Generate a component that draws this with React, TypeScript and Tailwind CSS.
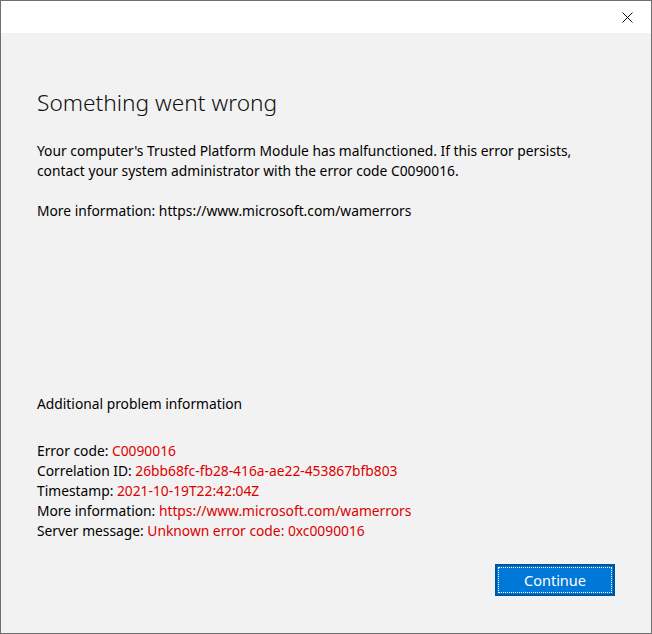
import React from 'react';

const red = 'text-[#dc0000]';

function Row({ label, value }: { label: string; value: string }) {
  return (
    <div className="h-[20px] leading-[20px]">
      {label} <span className={red}>{value}</span>
    </div>
  );
}

export default function App() {
  return (
    <div
      className="flex h-[634px] w-[652px] flex-col border border-[#6f6f6f] bg-[#f2f2f2] text-[13.8px] text-black"
      style={{ fontFamily: '"Noto Sans", "Open Sans", sans-serif' }}
    >
      {/* title bar */}
      <div className="flex h-[32px] shrink-0 items-center justify-end bg-white pr-[18px]">
        <svg width="11" height="11" viewBox="0 0 11 11" className="mt-[1px]">
          <path d="M0.5 0.5 L10.5 10.5 M10.5 0.5 L0.5 10.5" stroke="#111" strokeWidth="1" />
        </svg>
      </div>

      <div className="flex flex-1 flex-col px-[36px]">
        <h1 className="mt-[54px] h-[32px] text-[22.7px] font-light leading-[32px] text-[#111]">
          Something went wrong
        </h1>
        <p className="mt-[22px] leading-[20px]">
          Your computer's Trusted Platform Module has malfunctioned. If this error persists,
          <br />
          contact your system administrator with the error code C0090016.
        </p>
        <p className="mt-[20px] h-[20px] leading-[20px]">More information: https://www.microsoft.com/wamerrors</p>

        <div className="mt-[173px] h-[20px] leading-[20px]">Additional problem information</div>

        <div className="mt-[27px] flex flex-col">
          <Row label="Error code:" value="C0090016" />
          <Row label="Correlation ID:" value="26bb68fc-fb28-416a-ae22-453867bfb803" />
          <Row label="Timestamp:" value="2021-10-19T22:42:04Z" />
          <Row label="More information:" value="https://www.microsoft.com/wamerrors" />
          <Row label="Server message:" value="Unknown error code: 0xc0090016" />
        </div>

        <div className="mt-[23px] flex justify-end">
          <button className="h-[32px] w-[120px] border-2 border-[#005499] bg-[#0078d7] p-[1px] text-[14.5px] text-white">
            <span className="flex h-full w-full items-center justify-center border border-dotted border-white leading-none">
              Continue
            </span>
          </button>
        </div>
      </div>
    </div>
  );
}
